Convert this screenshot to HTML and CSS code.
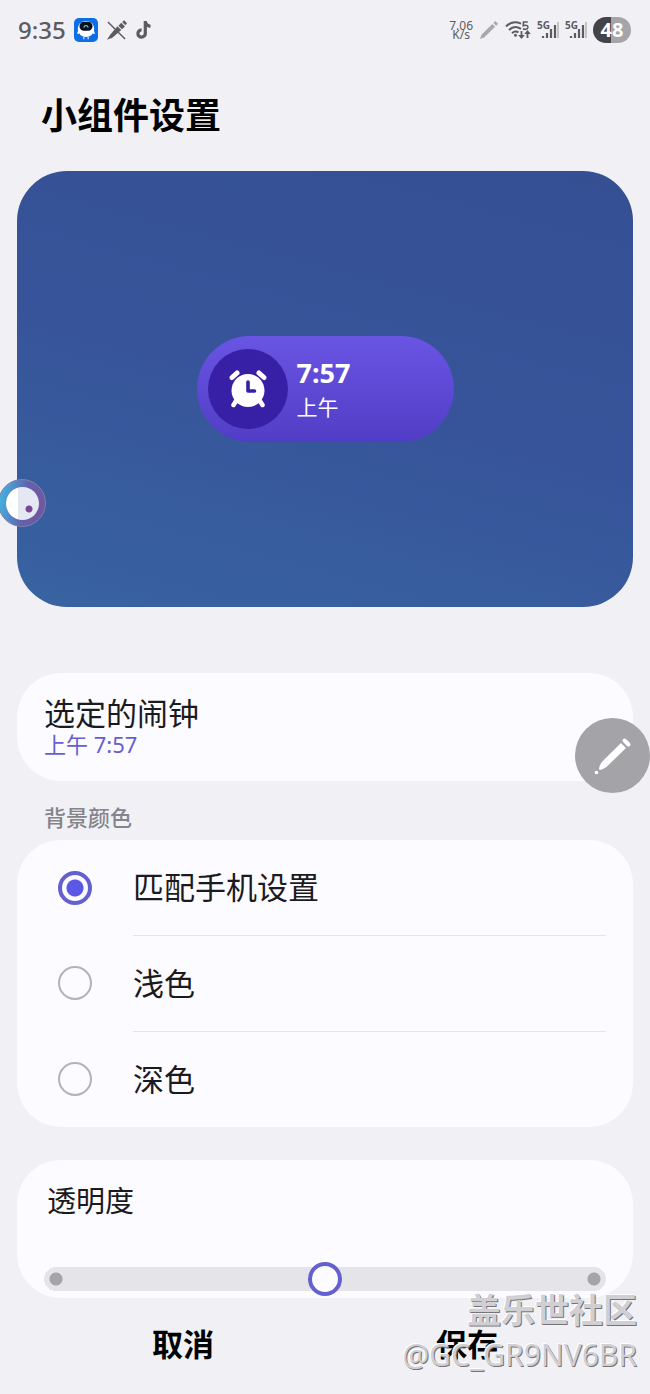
FILE: index.html
```html
<!DOCTYPE html>
<html lang="zh-CN">
<head>
<meta charset="utf-8">
<meta name="viewport" content="width=device-width, initial-scale=1">
<title>小组件设置</title>
<link rel="stylesheet" href="styles.css">
</head>
<body>
<div class="page">
  <header class="status">
    <div class="status-group">
      <span class="clock">9:35</span>
      <svg class="icon-app" viewBox="0 0 24 24" aria-hidden="true">
        <rect width="24" height="24" rx="5" fill="#0d6fe8"/>
        <path d="M5 10.5 3.4 14.5c-.5 1.5.7 2 1.6 1" fill="#fff"/>
        <path d="M19 10.5l1.600 4c.5 1.500-.7 2-1.600 1" fill="#fff"/>
        <ellipse cx="12" cy="11" rx="8.200" ry="8" fill="#fff"/>
        <rect x="5.500" y="3.800" width="13" height="9" rx="4.500" fill="#0b1020"/>
        <path d="M9.800 9.500q.6-2 2.200-2t2.200 2" fill="none" stroke="#5fd8c8" stroke-width="1.200"/>
        <path d="M9.800 19v2.300M14.200 19v2.300" stroke="#a8d4ff" stroke-width="1.500"/>
      </svg>
      <svg class="icon-pen-off" viewBox="0 0 22 22" aria-hidden="true">
        <path d="M2 2l18 18" stroke="#5c5b60" stroke-width="1.500"/>
        <path d="M1.200 20.800l1.300-3 1.700 1.700z" fill="#5c5b60"/>
        <path d="M3.500 16.500L12 6.500l4 4L6 19l-3 .3z" fill="#5c5b60"/>
        <path d="M13 6l3-3 3.800 3.800-3 3z" fill="#5c5b60"/>
        <path d="M17 2l2-1.700L22 3.500l-1.800 2z" fill="#5c5b60"/>
      </svg>
      <svg class="icon-note" viewBox="0 0 16 20" aria-hidden="true">
        <path d="M9.300 1v12.600a3.700 3.700 0 1 1-3.700-3.800M9.300 1.500c.3 2.700 2.200 4.500 5.200 4.800" fill="none" stroke="#5c5b60" stroke-width="3.200"/>
      </svg>
    </div>
    <div class="status-group status-right">
      <span class="speed"><span>7.06</span><span>K/s</span></span>
      <svg class="icon-pencil" viewBox="0 0 20 20" aria-hidden="true">
        <path d="M1 19l1.500-4.200L13.300 4l2.800 2.800L5.200 17.500z" fill="#a9a8ad"/>
        <path d="M14.300 3l2-2 2.800 2.800-2 2z" fill="#a9a8ad"/>
      </svg>
      <svg class="icon-wifi" viewBox="0 0 26 20" aria-hidden="true">
        <g fill="none" stroke="#5c5b60" stroke-width="2">
          <path d="M1 6.500C5.500 1.800 11 1.400 16 3.600"/>
          <path d="M4 10c3.500-3.400 8-3.600 12-1.200"/>
          <path d="M7 13.200c2-1.900 4.500-2 6.500-.8"/>
          <path d="M22.800 2h-4.300l-.3 3.600c4-1 5 .5 4.700 2-.4 2-3.200 2.200-4.900 1.200" stroke-width="1.600"/>
          <path d="M16.500 11v6M22.500 18v-5" stroke-width="1.800"/>
        </g>
        <circle cx="10.500" cy="15.300" r="1.500" fill="#5c5b60"/>
        <path d="M13.200 15h6.600l-3.300 4zM19.200 14h6.600l-3.300-4z" fill="#5c5b60"/>
      </svg>
      <span class="signal">
        <span class="network">5G</span>
        <svg class="icon-bars" viewBox="0 0 18 18" aria-hidden="true">
          <path d="M2 15v2M6 12v5M10 8v9M14 4v13" stroke="#5c5b60" stroke-width="2.200"/>
          <path d="M17 1v16" stroke="#c3c2c7" stroke-width="2"/>
        </svg>
      </span>
      <span class="signal">
        <span class="network">5G</span>
        <svg class="icon-bars" viewBox="0 0 18 18" aria-hidden="true">
          <path d="M2 15v2M6 12v5M10 8v9M14 4v13" stroke="#5c5b60" stroke-width="2.200"/>
          <path d="M17 1v16" stroke="#c3c2c7" stroke-width="2"/>
        </svg>
      </span>
      <span class="battery">48</span>
    </div>
  </header>

  <h1 class="title">小组件设置</h1>

  <main class="content">
    <section class="preview">
      <div class="widget">
        <span class="widget-icon">
          <svg class="icon-alarm" viewBox="0 0 38 38" aria-hidden="true">
            <circle cx="19" cy="20.500" r="16.500" fill="#fff"/>
            <path d="M3 7.500l5-4.500M35 7.500L30 3" stroke="#fff" stroke-width="5" stroke-linecap="round"/>
            <path d="M7 31l-2.500 4M31 31l2.500 4" stroke="#fff" stroke-width="4.500" stroke-linecap="round"/>
            <path d="M19 12v9h6.500" fill="none" stroke="#3820a6" stroke-width="3.600" stroke-linecap="round" stroke-linejoin="round"/>
          </svg>
        </span>
        <span class="widget-text">
          <strong class="widget-time">7:57</strong>
          <span class="widget-period">上午</span>
        </span>
      </div>
    </section>

    <button class="card alarm" type="button">
      <span class="alarm-name">选定的闹钟</span>
      <span class="alarm-time">上午 7:57</span>
    </button>

    <h2 class="section-title" id="bg-title">背景颜色</h2>
    <div class="card options" role="radiogroup" aria-labelledby="bg-title">
      <label class="option"><input class="radio" type="radio" name="bg" checked><span class="option-label">匹配手机设置</span></label>
      <label class="option"><input class="radio" type="radio" name="bg"><span class="option-label">浅色</span></label>
      <label class="option"><input class="radio" type="radio" name="bg"><span class="option-label">深色</span></label>
    </div>

    <div class="card opacity">
      <label class="opacity-label" for="opacity">透明度</label>
      <input class="slider" id="opacity" type="range" min="0" max="100" value="50">
    </div>
  </main>

  <footer class="actions">
    <button class="action" type="button">取消</button>
    <button class="action" type="button">保存</button>
  </footer>

  <div class="edge-handle"><span class="edge-face"></span></div>
  <button class="edit" type="button" aria-label="编辑">
    <svg class="icon-edit" viewBox="0 0 38 38" aria-hidden="true">
      <path d="M5 31.500c.5-3 2-5.500 4-7.800L27 6l5 5L14 28.500C11.500 31 8.500 32.500 5.500 33z" fill="#fff"/>
      <path d="M30.500 3.500l4 4" stroke="#fff" stroke-width="4" stroke-linecap="round"/>
      <circle cx="2.500" cy="35.500" r="1.800" fill="#fff"/>
    </svg>
  </button>
  <div class="watermark">
    <span class="watermark-name">盖乐世社区</span>
    <span class="watermark-user">@GC_GR9NV6BR</span>
  </div>
</div>
</body>
</html>
```
FILE: styles.css
```css
* { box-sizing: border-box; }

body {
  margin: 0;
  background: #f1f0f5;
  color: #1b1a20;
  font-family: "Noto Sans", "Noto Sans CJK SC", sans-serif;
}

button {
  border: 0;
  padding: 0;
  background: none;
  color: inherit;
  font: inherit;
}

.page {
  position: relative;
  min-height: 100vh;
  overflow: hidden;
}

.status {
  display: flex;
  justify-content: space-between;
  align-items: center;
  height: 60px;
  padding: 0 19px 0 18px;
  color: #5c5b60;
}
.status-group { display: flex; align-items: center; gap: 8px; }
.clock { font-size: 24px; line-height: 24px; font-weight: 500; }
.icon-app { width: 24px; height: 24px; }
.icon-pen-off { width: 21px; height: 21px; }
.icon-note { width: 18px; height: 20px; }
.speed {
  display: flex;
  flex-direction: column;
  align-items: center;
  font-size: 12px;
  line-height: 9px;
}
.icon-pencil { width: 20px; height: 20px; }
.icon-wifi { width: 26px; height: 20px; }
.status-right { gap: 6px; }
.signal { display: flex; align-items: flex-start; }
.network { font: 700 10px/10px "Noto Sans", sans-serif; margin-right: -9px; }
.icon-bars { width: 18px; height: 20px; }
.battery {
  width: 38px;
  border-radius: 13px;
  background: linear-gradient(90deg, #444347 48%, #a5a4a9 48%);
  color: #fff;
  font-size: 20px;
  font-weight: 700;
  line-height: 26px;
  text-align: center;
}

.title {
  margin: 0;
  padding: 28px 41px 27px;
  color: #000;
  font-size: 36px;
  font-weight: 700;
  line-height: 56px;
}

.content {
  display: flex;
  flex-direction: column;
  padding: 0 17px;
}

.preview {
  display: flex;
  align-items: center;
  justify-content: center;
  height: 436px;
  border-radius: 50px;
  background: linear-gradient(195deg, #354f93 0%, #37549a 50%, #3863a1 100%);
}
.widget {
  display: flex;
  align-items: center;
  gap: 9px;
  width: 257px;
  height: 106px;
  padding: 0 11px;
  border-radius: 53px;
  background: linear-gradient(#6955e3, #513dc5);
  color: #fff;
}
.widget-icon {
  display: flex;
  align-items: center;
  justify-content: center;
  width: 80px;
  height: 80px;
  border-radius: 50%;
  background: #3820a6;
}
.icon-alarm { width: 38px; height: 38px; }
.widget-text { display: flex; flex-direction: column; }
.widget-time { font-size: 27px; line-height: 36px; }
.widget-period { font-size: 21px; line-height: 32px; }

.card {
  border-radius: 44px;
  background: #fcfbff;
}

.alarm {
  display: flex;
  flex-direction: column;
  margin-top: 66px;
  padding: 22px 27px 24px;
  text-align: left;
}
.alarm-name { font-size: 31px; line-height: 36px; }
.alarm-time { color: #6560cf; font-size: 22px; line-height: 26px; }

.section-title {
  margin: 0;
  padding: 24px 27px 11px;
  color: #858489;
  font-size: 22px;
  font-weight: 500;
  line-height: 24px;
}

.options { padding: 0 27px 0 41px; }
.option {
  display: flex;
  align-items: center;
  gap: 41px;
}
.option-label {
  flex: 1;
  font-size: 31px;
  line-height: 95px;
}
.option + .option .option-label { border-top: 1px solid #e5e4ea; }
.radio {
  appearance: none;
  width: 34px;
  height: 34px;
  margin: 0;
  border: 2px solid #b3b2b5;
  border-radius: 50%;
}
.radio:checked {
  border: 4px solid #6560cf;
  background: radial-gradient(circle, #5c58e6 8px, transparent 9px);
}

.opacity {
  display: flex;
  flex-direction: column;
  gap: 42px;
  margin-top: 33px;
  padding: 22px 27px 2px;
}
.opacity-label { padding-left: 3px; font-size: 29px; line-height: 38px; }
.slider {
  appearance: none;
  width: 100%;
  height: 34px;
  margin: 0;
  background:
    radial-gradient(circle at 12px 50%, #a5a4a8 6px, transparent 7px),
    radial-gradient(circle at calc(100% - 12px) 50%, #a5a4a8 6px, transparent 7px),
    radial-gradient(circle at 12px 50%, #e5e4e9 12px, transparent 12px),
    radial-gradient(circle at calc(100% - 12px) 50%, #e5e4e9 12px, transparent 12px),
    linear-gradient(#e5e4e9, #e5e4e9) center / calc(100% - 24px) 24px no-repeat;
}
.slider::-webkit-slider-thumb {
  appearance: none;
  width: 34px;
  height: 34px;
  border: 4px solid #6560cf;
  border-radius: 50%;
  background: #fcfbff;
}

.actions {
  display: flex;
  padding: 20px 41px;
}
.action {
  flex: 1;
  color: #000;
  font-size: 31px;
  font-weight: 700;
  line-height: 52px;
}

.edge-handle {
  position: absolute;
  top: 479px;
  left: -2px;
  display: flex;
  align-items: center;
  justify-content: center;
  width: 48px;
  height: 48px;
  border: 1px solid #7c83a6;
  border-radius: 50%;
  background: linear-gradient(100deg, #42b5e4 5%, #6361ad 55%, #76539d 100%);
}
.edge-face {
  width: 33px;
  height: 33px;
  border-radius: 50%;
  background:
    radial-gradient(circle at 23px 22px, #78479b 3px, transparent 4px),
    linear-gradient(90deg, #fff 35%, #e5e7f3 35%);
}

.edit {
  position: absolute;
  top: 718px;
  right: 0;
  display: flex;
  align-items: center;
  justify-content: center;
  width: 75px;
  height: 75px;
  border-radius: 50%;
  background: #a4a3a7;
}
.icon-edit { width: 38px; height: 38px; }

.watermark {
  position: absolute;
  right: 13px;
  bottom: 17px;
  display: flex;
  flex-direction: column;
  align-items: flex-end;
  color: #d0cfd3;
  text-shadow: 1px 1px #747378, -1px -1px #fff;
  pointer-events: none;
}
.watermark-name { font-size: 34px; font-weight: 700; line-height: 46px; }
.watermark-user { font-size: 30px; line-height: 44px; }
```
